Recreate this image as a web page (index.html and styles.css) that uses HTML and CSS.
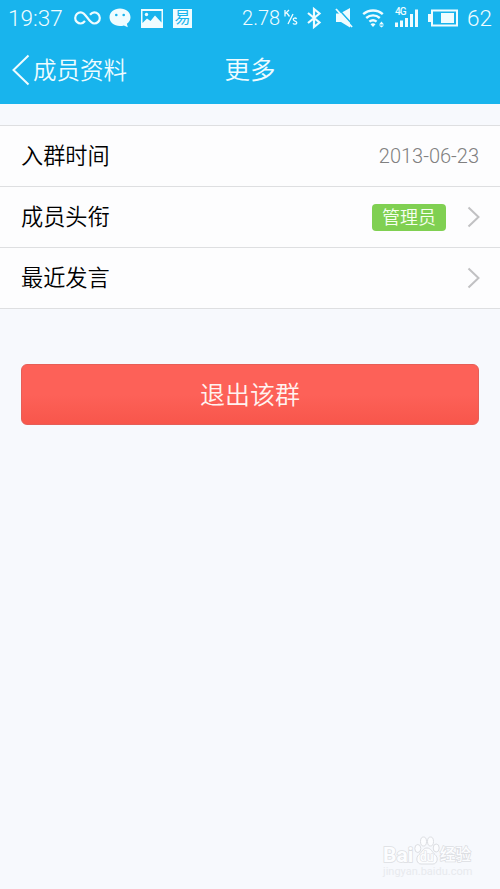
FILE: index.html
```html
<!DOCTYPE html>
<html lang="zh-CN">
<head>
<meta charset="utf-8">
<meta name="viewport" content="width=device-width, initial-scale=1">
<title>更多</title>
<link rel="stylesheet" href="styles.css">
</head>
<body>
<header class="top">
  <div class="status">
    <div class="status-left">
      <span class="clock">19:37</span>
      <svg class="infinity" width="27" height="16" viewBox="0 0 27 16"><path d="M11 11C9.500 12.800 8.500 13.500 6.800 13.500a5.600 5.600 0 0 1 0-11.200C12.500 2.300 14.500 13.500 20.200 13.500a5.600 5.600 0 0 0 0-11.200C18.500 2.300 17.500 3 16 4.800"/></svg>
      <svg class="chat" width="22" height="20" viewBox="0 0 22 20"><path class="solid" d="M11 .5C5 .5.500 4.300.500 9.200S5 18 11 18c1.400 0 2.700-.2 3.900-.6l3.900 1.900-.9-3.500c2.200-1.600 3.600-3.900 3.600-6.600C21.500 4.300 17 .5 11 .5z"/><circle class="hole" cx="7.300" cy="7" r="1.300"/><circle class="hole" cx="14.700" cy="7" r="1.300"/></svg>
      <svg class="photo" width="22" height="19" viewBox="0 0 22 19"><path class="solid" fill-rule="evenodd" d="M0 0h22v19H0zM1.500 2v12L6 9.500l3.500 2.500L14 6.500l6.500 7V2z"/><circle class="solid" cx="5.500" cy="5.500" r="1.700"/></svg>
      <span class="news">易</span>
    </div>
    <div class="status-right">
      <span class="speed">2.78</span>
      <svg class="unit" width="14" height="16" viewBox="0 0 14 16"><path d="M1 0v6.500M5 0L1.500 3.500M2.500 2.500L5.500 6.500M9 4L4 14M12.700 8.700C11.500 7.500 9 7.900 9.300 9.700c.3 1.700 3.500 1 3.500 3 0 1.900-2.900 1.800-3.900.6"/></svg>
      <svg class="bluetooth" width="14" height="22" viewBox="0 0 14 22"><path d="M1 6l11.500 9.500L7 20V2l5.500 4.500L1 16"/></svg>
      <svg class="mute" width="18" height="20" viewBox="0 0 18 20"><path class="solid" d="M1 5.500h4L15 0v19.500L6 14H1z"/><path class="gap" d="M2.500 0l15.500 17"/><path d="M1 1l16 18"/></svg>
      <svg class="wifi" width="23" height="20" viewBox="0 0 23 20"><path d="M1.200 6.200c5.600-5 14.200-5 19.600 0M4.200 10c4-3.500 9.700-3.500 13.600 0M7.400 13.700c2.200-1.900 5-1.900 7.200 0"/><path class="solid" d="M8.500 16.200c1.500-1.200 3.500-1.200 5 0L11 19zM19.500 13.500l2.500 3h-5zM19.500 19.500l-2.500-2h5z"/></svg>
      <div class="signal">
        <span class="network">4G</span>
        <svg width="25" height="18" viewBox="0 0 25 18"><path class="solid" d="M1 13.500h3V18H1zM6 11.500h3V18H6zM11 9h3v9h-3zM16 5h3v13h-3zM21 .5h3V18h-3z"/></svg>
      </div>
      <svg class="battery" width="30" height="18" viewBox="0 0 30 18"><path d="M4 1.500h25v15H4z"/><path class="solid" d="M0 5h3v8H0zM13 4h13v10H13z"/></svg>
      <span class="percent">62</span>
    </div>
  </div>
  <nav class="bar">
    <a class="back"><svg width="18" height="32" viewBox="0 0 18 32"><path d="M16.500 1.500L1.500 16l15 14.500"/></svg><span>成员资料</span></a>
    <h1>更多</h1>
  </nav>
</header>
<main>
  <ul class="list">
    <li><span class="label">入群时间</span><span class="date">2013-06-23</span></li>
    <li><span class="label">成员头衔</span><span class="badge">管理员</span><svg class="arrow" width="13" height="22" viewBox="0 0 13 22"><path d="M1.500 1.500L11.500 11l-10 9.500"/></svg></li>
    <li><span class="label">最近发言</span><svg class="arrow" width="13" height="22" viewBox="0 0 13 22"><path d="M1.500 1.500L11.500 11l-10 9.500"/></svg></li>
  </ul>
  <button class="quit">退出该群</button>
</main>
<div class="watermark">
  <div class="brand">
    <span class="latin">Bai</span>
    <svg width="26" height="29" viewBox="0 0 26 29"><ellipse cx="3.800" cy="12.500" rx="3" ry="4"/><ellipse cx="9.500" cy="5.500" rx="3" ry="4.500"/><ellipse cx="16.500" cy="5.500" rx="3" ry="4.500"/><ellipse cx="22.200" cy="12" rx="3" ry="4"/><path d="M13 12c-4 0-5 4-8 6.500-4 3.500-2 9.500 2 9.500h12c4 0 6-6 2-9.500C18 16 17 12 13 12z"/><text x="6" y="25">du</text></svg>
    <span class="cjk">经验</span>
  </div>
  <div class="site">jingyan.baidu.com</div>
</div>
</body>
</html>
```
FILE: styles.css
```css
* { box-sizing: border-box; }

body {
  position: relative;
  height: 889px;
  margin: 0;
  overflow: hidden;
  background: #f7f9fd;
  color: #000;
  font-family: Roboto, "Noto Sans CJK SC", sans-serif;
}

svg { display: block; flex: none; overflow: visible; fill: none; stroke: #effcff; }
.solid { fill: #effcff; stroke: none; }
.hole { fill: #18b4ed; stroke: none; }

.top { height: 104px; background: #18b4ed; color: #effcff; }

.status {
  display: flex;
  justify-content: space-between;
  height: 36px;
  padding: 0 8px 0 8px;
}
.status-left, .status-right { display: flex; align-items: center; }
.clock, .percent { font-size: 22.500px; font-weight: 300; line-height: 36px; }
.clock { width: 66px; }
.infinity { stroke-width: 2.200; margin-right: 8px; }
.chat { margin-right: 10px; }
.photo { margin-right: 10px; }
.news {
  width: 19px;
  height: 19px;
  background: #effcff;
  color: #18b4ed;
  font-size: 16px;
  line-height: 18px;
  text-align: center;
}

.speed { width: 42px; font-size: 20px; font-weight: 300; line-height: 34px; }
.unit { stroke-width: 1.300; margin-right: 9px; }
.bluetooth { stroke-width: 2.200; margin-right: 14px; }
.mute { stroke-width: 1.800; margin-right: 9px; }
.mute .gap { stroke: #18b4ed; stroke-width: 1.500; }
.wifi { stroke-width: 2.400; margin-right: 9px; }
.signal { position: relative; margin-right: 9px; }
.network {
  position: absolute;
  top: -2px;
  left: 1px;
  font-size: 10px;
  font-weight: 500;
  line-height: 10px;
  letter-spacing: -1px;
}
.battery { stroke-width: 2; margin-right: 9px; }

.bar {
  display: grid;
  grid-template-columns: 1fr auto 1fr;
  align-items: center;
  height: 68px;
  padding: 0 12px;
}
.back { display: flex; align-items: center; gap: 3px; font-size: 23.500px; }
.back svg { stroke-width: 2; }
.back span { padding-bottom: 3px; line-height: 60px; }
.bar h1 { margin: 0; padding-bottom: 4px; font-size: 25.500px; line-height: 60px; }
.back span, .bar h1, .quit { font-family: "Noto Sans CJK SC", sans-serif; font-weight: 350; }

.list {
  margin: 21px 0 0;
  padding: 0;
  list-style: none;
  background: #fdfdfe;
  border-top: 1px solid #dedfe1;
}
.list li {
  display: flex;
  align-items: center;
  height: 61px;
  padding: 0 20px 0 21px;
  border-bottom: 1px solid #dedfe1;
}
.label {
  margin-right: auto;
  padding-bottom: 4px;
  font-family: "Noto Sans CJK SC", sans-serif;
  font-size: 22.200px;
  font-weight: 350;
  line-height: 54px;
}
.date { padding-right: 1px; color: #808080; font-size: 20px; font-weight: 300; }
.badge {
  width: 74px;
  height: 27px;
  border-radius: 4px;
  background: #80d052;
  color: #f7fff0;
  font-family: "Noto Sans CJK SC", sans-serif;
  font-size: 18px;
  font-weight: 350;
  line-height: 25px;
  text-align: center;
}
.arrow { margin-left: 21px; stroke: #c1c1c3; stroke-width: 2; }

.quit {
  display: block;
  width: 458px;
  height: 61px;
  margin: 55px auto 0;
  padding: 0 0 2px;
  border: 1px solid #e65e57;
  border-radius: 6px;
  background: linear-gradient(#fd6158 50%, #f8564b);
  color: #fff3f0;
  font-size: 25px;
  line-height: 57px;
}

.watermark { position: absolute; left: 383px; top: 835px; width: 90px; }
.brand { display: flex; align-items: flex-end; height: 30px; }
.brand svg { fill: #fcfdff; stroke: #dcdee2; stroke-width: 1; }
.brand span { color: #fcfdff; -webkit-text-stroke: 1.500px #dcdee2; paint-order: stroke fill; font-weight: 700; }
.latin { width: 31px; font-size: 21px; line-height: 20px; }
.brand .cjk { font-size: 15.500px; font-weight: 500; line-height: 20px; }
.brand text { font-size: 12px; font-weight: 700; stroke-width: 1.200; paint-order: stroke fill; }
.site { color: #e8eaee; font-size: 11px; line-height: 13px; }
```
